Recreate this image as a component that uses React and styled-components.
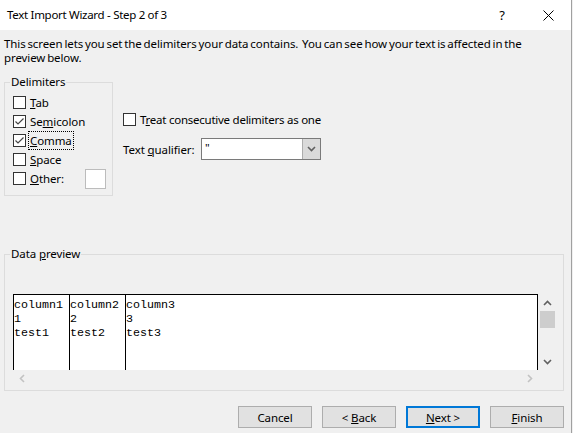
import styled, { createGlobalStyle } from "styled-components";

const GlobalStyle = createGlobalStyle`
  html, body {
    margin: 0;
    padding: 0;
  }
  body {
    background: #f0f0f0;
    font-family: "Noto Sans", "Segoe UI", sans-serif;
    font-size: 11.5px;
    letter-spacing: -0.1px;
    color: #000;
  }
`;

const Desktop = styled.div`
  display: flex;
  width: 573px;
  height: 433px;
  overflow: hidden;
`;

const Window = styled.div`
  width: 571px;
  height: 433px;
  display: flex;
  flex-direction: column;
  background: #f0f0f0;
`;

const Edge = styled.div`
  width: 1px;
  border-left: 1px solid #a0a0a0;
  background: #f0f0f0;
`;

const TitleBar = styled.div`
  height: 30px;
  flex: none;
  display: flex;
  align-items: center;
  background: #fff;
  padding-left: 7px;
`;

const Title = styled.div`
  flex: 1;
  line-height: 30px;
  letter-spacing: -0.3px;
`;

const CaptionButton = styled.div`
  width: 46px;
  height: 30px;
  display: flex;
  align-items: center;
  justify-content: center;
  font-size: 13px;
`;

const Description = styled.p`
  margin: 7px 4px 0;
  line-height: 14px;
  white-space: nowrap;
  word-spacing: -1px;
`;

const TopSection = styled.div`
  display: flex;
  align-items: flex-start;
  gap: 10px;
  margin: 9px 0 0 4px;
`;

const Group = styled.fieldset`
  margin: 0;
  border: 1px solid #dcdcdc;
  padding: ${(p) => p.$pad};
  width: ${(p) => p.$width}px;
  box-sizing: border-box;
  min-width: 0;
`;

const Legend = styled.legend`
  padding: 0 1px;
  margin-left: ${(p) => p.$shift}px;
  line-height: 16px;
`;

const Row = styled.label`
  display: flex;
  align-items: center;
  gap: 4px;
  height: 19px;
`;

const Box = styled.span`
  width: 13px;
  height: 13px;
  box-sizing: border-box;
  border: 1px solid #333;
  background: #fff;
  display: flex;
  align-items: center;
  justify-content: center;
  flex: none;
`;

const Key = styled.u`
  text-decoration-thickness: 1px;
  text-underline-offset: 1px;
`;

const Focus = styled.span`
  outline: 1px dotted #000;
  outline-offset: 1px;
`;

const SmallInput = styled.div`
  width: 30px;
  height: 20px;
  box-sizing: border-box;
  border: 1px solid #bcbcbc;
  background: #fff;
  margin-left: 17px;
`;

const RightColumn = styled.div`
  display: flex;
  flex-direction: column;
  gap: 9px;
  margin-top: 36px;
`;

const Narrow = styled.span`
  letter-spacing: -0.25px;
`;

const QualifierRow = styled.div`
  display: flex;
  align-items: center;
  height: 22px;
`;

const QualifierLabel = styled.span`
  width: 78px;
`;

const Combo = styled.div`
  width: 120px;
  height: 22px;
  box-sizing: border-box;
  border: 1px solid #7a7a7a;
  background: #fff;
  display: flex;
`;

const ComboValue = styled.span`
  flex: 1;
  padding-left: 3px;
  line-height: 18px;
`;

const ComboButton = styled.span`
  width: 17px;
  background: #dadada;
  border-left: 1px solid #adadad;
  display: flex;
  align-items: center;
  justify-content: center;
`;

const PreviewGroup = styled(Group)`
  margin: 50px 0 0 4px;
`;

const Preview = styled.div`
  display: grid;
  grid-template-columns: 525px 18px;
  grid-template-rows: 76px 17px;
`;

const Sheet = styled.div`
  background: #fff;
  border: 1px solid #000;
  border-bottom: none;
  display: flex;
  font-family: "Liberation Mono", "Courier New", monospace;
  font-size: 11.67px;
  letter-spacing: 0;
  line-height: 14px;
  overflow: hidden;
`;

const Column = styled.div`
  width: ${(p) => (p.$last ? "auto" : "56px")};
  flex: ${(p) => (p.$last ? 1 : "none")};
  box-sizing: border-box;
  border-right: ${(p) => (p.$last ? "none" : "1px solid #000")};
  padding-top: 3px;
  white-space: pre;
`;

const VScroll = styled.div`
  display: flex;
  flex-direction: column;
  align-items: center;
  padding-left: 1px;
`;

const Arrow = styled.div`
  height: 17px;
  width: 17px;
  display: flex;
  align-items: center;
  justify-content: center;
  flex: none;
`;

const Thumb = styled.div`
  width: 15px;
  height: 17px;
  background: #cdcdcd;
  flex: none;
`;

const Track = styled.div`
  flex: 1;
`;

const HScroll = styled.div`
  display: flex;
  justify-content: space-between;
`;

const Buttons = styled.div`
  display: flex;
  justify-content: flex-end;
  gap: 10px;
  padding-right: 7px;
  margin-top: 15px;
`;

const Button = styled.button`
  width: 74px;
  height: 22px;
  box-sizing: border-box;
  font: inherit;
  letter-spacing: inherit;
  color: #000;
  background: #e1e1e1;
  border: ${(p) => (p.$default ? "2px solid #0078d7" : "1px solid #adadad")};
  padding: 0;
`;

const Chevron = ({ dir = "down", color = "#606060" }) => (
  <svg width="9" height="6" viewBox="0 0 9 6">
    <polyline
      points={dir === "down" ? "1,1 4.5,4.5 8,1" : "1,5 4.5,1.5 8,5"}
      fill="none"
      stroke={color}
      strokeWidth="1.6"
    />
  </svg>
);

const SideChevron = ({ dir }) => (
  <svg width="6" height="9" viewBox="0 0 6 9">
    <polyline
      points={dir === "left" ? "5,1 1.5,4.5 5,8" : "1,1 4.5,4.5 1,8"}
      fill="none"
      stroke="#c2c2c2"
      strokeWidth="1.6"
    />
  </svg>
);

const Check = ({ checked }) => (
  <Box>
    {checked && (
      <svg width="11" height="11" viewBox="0 0 11 11">
        <polyline points="1.5,5.5 4,8 9.5,2.5" fill="none" stroke="#444" strokeWidth="1.2" />
      </svg>
    )}
  </Box>
);

const delimiters = [
  { pre: "", key: "T", post: "ab", checked: false },
  { pre: "Se", key: "m", post: "icolon", checked: true },
  { pre: "", key: "C", post: "omma", checked: true, focus: true },
  { pre: "", key: "S", post: "pace", checked: false },
];

const columns = [
  ["column1", "1", "test1"],
  ["column2", "2", "test2"],
  ["column3", "3", "test3"],
];

export default function App() {
  return (
    <>
      <GlobalStyle />
      <Desktop>
        <Window>
          <TitleBar>
            <Title>Text Import Wizard - Step 2 of 3</Title>
            <CaptionButton>?</CaptionButton>
            <CaptionButton>
              <svg width="11" height="11" viewBox="0 0 11 11">
                <path d="M0.5 0.5 L10.5 10.5 M10.5 0.5 L0.5 10.5" stroke="#000" strokeWidth="1" />
              </svg>
            </CaptionButton>
          </TitleBar>

          <Description>
            This screen lets you set the delimiters your data contains.&nbsp; You can see how your text is affected in the
            <br />
            preview below.
          </Description>

          <TopSection>
            <Group $width={109} $pad="3px 6px 7px 8px">
              <Legend $shift={-3}>Delimiters</Legend>
              {delimiters.map((d) => {
                const text = (
                  <>
                    {d.pre}
                    <Key>{d.key}</Key>
                    {d.post}
                  </>
                );
                return (
                  <Row key={d.post}>
                    <Check checked={d.checked} />
                    {d.focus ? <Focus>{text}</Focus> : <span>{text}</span>}
                  </Row>
                );
              })}
              <Row>
                <Check />
                <span>
                  <Key>O</Key>ther:
                </span>
                <SmallInput />
              </Row>
            </Group>

            <RightColumn>
              <Row>
                <Check />
                <Narrow>
                  T<Key>r</Key>eat consecutive delimiters as one
                </Narrow>
              </Row>
              <QualifierRow>
                <QualifierLabel>
                  Text <Key>q</Key>ualifier:
                </QualifierLabel>
                <Combo>
                  <ComboValue>"</ComboValue>
                  <ComboButton>
                    <Chevron />
                  </ComboButton>
                </Combo>
              </QualifierRow>
            </RightColumn>
          </TopSection>

          <PreviewGroup $width={560} $pad="32px 6px 3px 8px">
            <Legend $shift={-3}>
              Data <Key>p</Key>review
            </Legend>
            <Preview>
              <Sheet>
                {columns.map((c, i) => (
                  <Column key={c[0]} $last={i === columns.length - 1}>
                    {c.join("\n")}
                  </Column>
                ))}
              </Sheet>
              <VScroll>
                <Arrow>
                  <Chevron dir="up" />
                </Arrow>
                <Thumb />
                <Track />
                <Arrow>
                  <Chevron />
                </Arrow>
              </VScroll>
              <HScroll>
                <Arrow>
                  <SideChevron dir="left" />
                </Arrow>
                <Arrow>
                  <SideChevron dir="right" />
                </Arrow>
              </HScroll>
            </Preview>
          </PreviewGroup>

          <Buttons>
            <Button>Cancel</Button>
            <Button>
              &lt; <Key>B</Key>ack
            </Button>
            <Button $default>
              <Key>N</Key>ext &gt;
            </Button>
            <Button>
              <Key>F</Key>inish
            </Button>
          </Buttons>
        </Window>
        <Edge />
      </Desktop>
    </>
  );
}
